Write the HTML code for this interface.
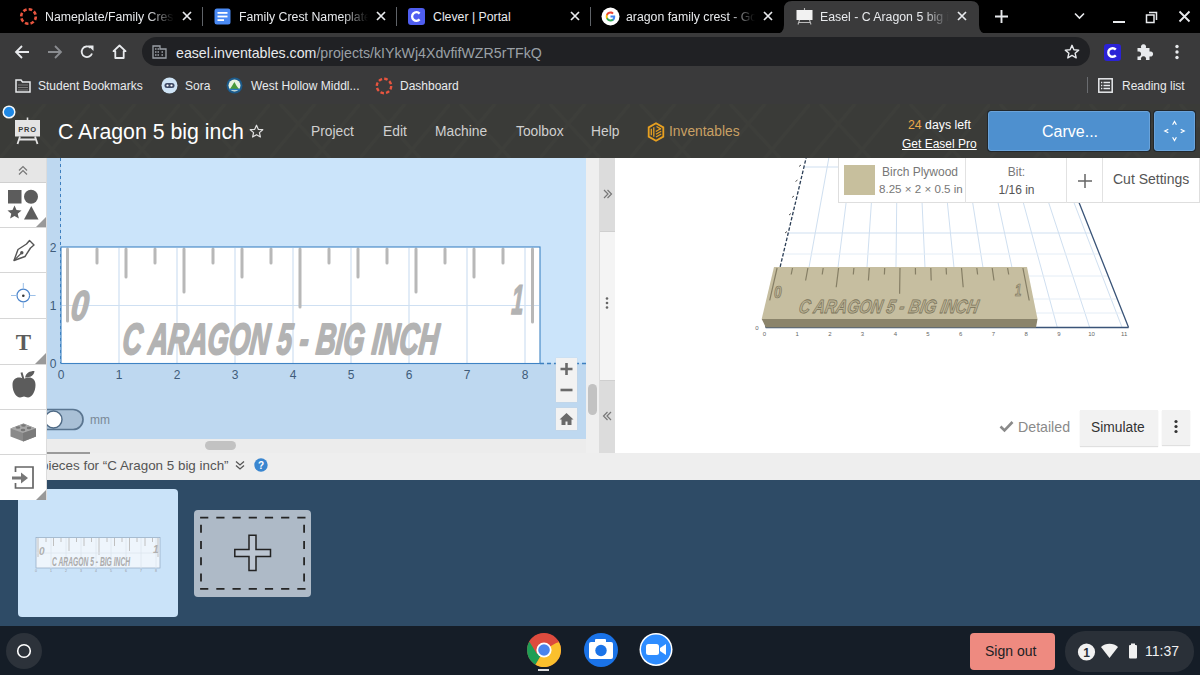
<!DOCTYPE html>
<html><head><meta charset="utf-8">
<style>
*{margin:0;padding:0;box-sizing:border-box}
html,body{width:1200px;height:675px;overflow:hidden;background:#000;font-family:"Liberation Sans",sans-serif;position:relative}
.a{position:absolute}
.t{position:absolute;white-space:nowrap;line-height:1.15}
#tabs{left:0;top:0;width:1200px;height:33px;background:#000}
#addr{left:0;top:33px;width:1200px;height:35px;background:#3a3a3b}
#bm{left:0;top:68px;width:1200px;height:36px;background:#3a3a3b}
#hdr{left:0;top:104px;width:1200px;height:54px;background:#3a3b38}
.tabtxt{color:#e8eaed;font-size:12.3px;top:10px;overflow:hidden}
.fade{-webkit-mask-image:linear-gradient(90deg,#000 80%,transparent 100%)}
.fade2{-webkit-mask-image:linear-gradient(90deg,#000 80%,transparent 100%)}
.bmt{top:12px;font-size:12px;color:#e8eaed}
.mn{top:20px;font-size:13.8px;color:#d0d0d0}
</style></head><body>
<div id="tabs" class="a">
  <!-- tab1 -->
  <svg class="a" style="left:18px;top:6px" width="21" height="21" viewBox="0 0 21 21"><circle cx="10.5" cy="10.5" r="7.3" fill="none" stroke="#e8553f" stroke-width="2.6" stroke-dasharray="3.6 2.13"/></svg>
  <div class="t tabtxt fade" style="left:45px;width:129px">Nameplate/Family Crest</div>
  <svg class="a x" style="left:182px;top:11px" width="10" height="10" viewBox="0 0 10 10"><path d="M1 1L9 9M9 1L1 9" stroke="#e8eaed" stroke-width="1.7"/></svg>
  <div class="a" style="left:202px;top:7px;width:1px;height:19px;background:#5f6368"></div>
  <!-- tab2 -->
  <svg class="a" style="left:214px;top:8px" width="17" height="17" viewBox="0 0 17 17"><rect x="0.5" y="0.5" width="16" height="16" rx="2.5" fill="#4a8af4"/><rect x="3.5" y="4" width="10" height="1.8" fill="#fff"/><rect x="3.5" y="7.6" width="10" height="1.8" fill="#fff"/><rect x="3.5" y="11.2" width="6.5" height="1.8" fill="#fff"/></svg>
  <div class="t tabtxt fade" style="left:239px;width:129px">Family Crest Nameplate</div>
  <svg class="a" style="left:376px;top:11px" width="10" height="10" viewBox="0 0 10 10"><path d="M1 1L9 9M9 1L1 9" stroke="#e8eaed" stroke-width="1.7"/></svg>
  <div class="a" style="left:396px;top:7px;width:1px;height:19px;background:#5f6368"></div>
  <!-- tab3 -->
  <svg class="a" style="left:408px;top:8px" width="17" height="17" viewBox="0 0 17 17"><rect x="0" y="0" width="17" height="17" rx="3" fill="#4f5ef0"/><path d="M11.6 5.6A4.3 4.3 0 1 0 11.6 11.4" fill="none" stroke="#fff" stroke-width="2.3"/></svg>
  <div class="t tabtxt" style="left:433px">Clever | Portal</div>
  <svg class="a" style="left:570px;top:11px" width="10" height="10" viewBox="0 0 10 10"><path d="M1 1L9 9M9 1L1 9" stroke="#e8eaed" stroke-width="1.7"/></svg>
  <div class="a" style="left:590px;top:7px;width:1px;height:19px;background:#5f6368"></div>
  <!-- tab4 -->
  <svg class="a" style="left:601px;top:7px" width="19" height="19" viewBox="0 0 19 19"><circle cx="9.5" cy="9.5" r="9" fill="#fff"/>
    <path d="M14.2 9.7c0-.4 0-.8-.1-1.1H9.5v2h2.6c-.1.7-.5 1.2-1 1.6v1.2h1.6c1-.9 1.5-2.2 1.5-3.7z" fill="#4285f4"/>
    <path d="M9.5 14.4c1.3 0 2.4-.4 3.2-1.2l-1.6-1.2c-.4.3-1 .5-1.6.5-1.3 0-2.3-.8-2.7-2H5.2v1.3c.8 1.6 2.4 2.6 4.3 2.6z" fill="#34a853"/>
    <path d="M6.8 10.6c-.1-.3-.2-.7-.2-1.1s.1-.7.2-1.1V7.1H5.2C4.9 7.8 4.7 8.6 4.7 9.5s.2 1.7.5 2.4l1.6-1.3z" fill="#fbbc05"/>
    <path d="M9.5 6.6c.7 0 1.3.2 1.8.7l1.4-1.4C11.9 5.1 10.8 4.6 9.5 4.6c-1.9 0-3.5 1.1-4.3 2.6l1.6 1.3c.4-1.1 1.4-1.9 2.7-1.9z" fill="#ea4335"/></svg>
  <div class="t tabtxt fade" style="left:626px;width:129px">aragon family crest - Google</div>
  <svg class="a" style="left:763px;top:11px" width="10" height="10" viewBox="0 0 10 10"><path d="M1 1L9 9M9 1L1 9" stroke="#e8eaed" stroke-width="1.7"/></svg>
  <!-- active tab -->
  <svg class="a" style="left:775px;top:0" width="222" height="34" viewBox="0 0 222 34"><path d="M0 34 Q9 34 9 25 L9 9 Q9 1 17 1 L196 1 Q204 1 204 9 L204 25 Q204 34 213 34 Z" fill="#3a3a3b"/></svg>
  <svg class="a" style="left:796px;top:8px" width="17" height="17" viewBox="0 0 17 17"><rect x="0.5" y="2" width="16" height="10" fill="#f1f1f1"/><path d="M3.5 12L2 16.5M13.5 12L15 16.5M8.5 0v2M3 14.5h11" stroke="#bbb" stroke-width="1.1"/></svg>
  <div class="t tabtxt fade2" style="left:820px;width:129px">Easel - C Aragon 5 big inch</div>
  <svg class="a" style="left:957px;top:11px" width="10" height="10" viewBox="0 0 10 10"><path d="M1 1L9 9M9 1L1 9" stroke="#e8eaed" stroke-width="1.7"/></svg>
  <!-- right controls -->
  <svg class="a" style="left:994px;top:9px" width="15" height="15" viewBox="0 0 15 15"><path d="M7.5 1v13M1 7.5h13" stroke="#e8eaed" stroke-width="1.9"/></svg>
  <svg class="a" style="left:1074px;top:12px" width="11" height="8" viewBox="0 0 11 8"><path d="M1 1.5l4.5 4.5 4.5-4.5" fill="none" stroke="#e8eaed" stroke-width="1.6"/></svg>
  <div class="a" style="left:1113px;top:21px;width:12px;height:2px;background:#e8eaed"></div>
  <svg class="a" style="left:1145px;top:11px" width="13" height="13" viewBox="0 0 13 13"><path d="M4 1.5h7.5V9M1.5 4h7.5v7.5H1.5z" fill="none" stroke="#e8eaed" stroke-width="1.5"/></svg>
  <svg class="a" style="left:1178px;top:10px" width="13" height="13" viewBox="0 0 13 13"><path d="M1.5 1.5L11.5 11.5M11.5 1.5L1.5 11.5" stroke="#e8eaed" stroke-width="1.8"/></svg>
</div>
<div id="addr" class="a">
  <svg class="a" style="left:14px;top:11px" width="16" height="16" viewBox="0 0 16 16"><path d="M15 8H2.5M8 2L2 8l6 6" fill="none" stroke="#e8eaed" stroke-width="1.8"/></svg>
  <svg class="a" style="left:47px;top:11px" width="16" height="16" viewBox="0 0 16 16"><path d="M1 8h12.5M8 2l6 6-6 6" fill="none" stroke="#8a8c90" stroke-width="1.8"/></svg>
  <svg class="a" style="left:79px;top:11px" width="16" height="16" viewBox="0 0 16 16"><path d="M13 9.5A5.3 5.3 0 1 1 11.5 3.8" fill="none" stroke="#e8eaed" stroke-width="1.8"/><path d="M9 1.5h5.5V7z" fill="#e8eaed"/></svg>
  <svg class="a" style="left:112px;top:11px" width="15" height="15" viewBox="0 0 15 15"><path d="M7.5 1.5L1.5 7.2h1.8V14h8.4V7.2h1.8z" fill="none" stroke="#e8eaed" stroke-width="1.8" stroke-linejoin="round"/></svg>
  <div class="a" style="left:142px;top:4px;width:948px;height:29px;border-radius:15px;background:#202124"></div>
  <svg class="a" style="left:152px;top:12px" width="15" height="14" viewBox="0 0 15 14"><path d="M1 13V1h7v3h6v9z" fill="none" stroke="#9aa0a6" stroke-width="1.3"/><path d="M3 4h1.5M5.5 4H7M3 7h1.5M5.5 7H7M3 10h1.5M5.5 10H7M9.5 7h1.5M9.5 10h1.5" stroke="#9aa0a6" stroke-width="1.4"/></svg>
  <div class="t" style="left:176px;top:11.5px;font-size:14.2px;color:#e8eaed">easel.inventables.com<span style="color:#9aa0a6">/projects/kIYkWj4XdvfifWZR5rTFkQ</span></div>
  <svg class="a" style="left:1064px;top:11px" width="16" height="16" viewBox="0 0 16 16"><path d="M8 1.3l1.9 4.4 4.8.4-3.6 3.1 1.1 4.7L8 11.4l-4.2 2.5 1.1-4.7L1.3 6.1l4.8-.4z" fill="none" stroke="#e8eaed" stroke-width="1.4" stroke-linejoin="round"/></svg>
  <svg class="a" style="left:1104px;top:11px" width="17" height="17" viewBox="0 0 17 17"><rect x="0" y="0" width="17" height="17" rx="3" fill="#2b22d6"/><path d="M11.8 5.6A4.3 4.3 0 1 0 11.8 11.4" fill="none" stroke="#fff" stroke-width="2.4"/></svg>
  <svg class="a" style="left:1136px;top:9px" width="19" height="19" viewBox="0 0 19 19"><path d="M1.5 6H5.2A2.6 2.6 0 1 1 9.8 6H13.5V9.6A2.6 2.6 0 1 1 13.5 14.4V18H9.8A2.6 2.6 0 1 0 5.2 18H1.5V14.4A2.6 2.6 0 1 0 1.5 9.6z" fill="#e8eaed"/></svg>
  <svg class="a" style="left:1174px;top:11px" width="6" height="16" viewBox="0 0 6 16"><circle cx="3" cy="2.5" r="1.7" fill="#e8eaed"/><circle cx="3" cy="8" r="1.7" fill="#e8eaed"/><circle cx="3" cy="13.5" r="1.7" fill="#e8eaed"/></svg>
</div>
<div id="bm" class="a">
  <svg class="a" style="left:15px;top:11px" width="16" height="14" viewBox="0 0 16 14"><path d="M1 1h5l1.5 2H15v10H1z" fill="none" stroke="#e8eaed" stroke-width="1.5"/><path d="M3.5 6h9M3.5 8.5h9M3.5 11h9" stroke="#bbb" stroke-width="1" stroke-dasharray="1 1"/></svg>
  <div class="t bmt" style="left:38px">Student Bookmarks</div>
  <svg class="a" style="left:161px;top:9px" width="17" height="17" viewBox="0 0 17 17"><circle cx="8.5" cy="8.5" r="8" fill="#cfe4f6"/><rect x="3.5" y="6" width="10" height="5" rx="2.5" fill="#3e4a66"/><circle cx="6.5" cy="8.5" r="1.1" fill="#fff"/><circle cx="10.5" cy="8.5" r="1.1" fill="#fff"/></svg>
  <div class="t bmt" style="left:185px">Sora</div>
  <svg class="a" style="left:226px;top:9px" width="17" height="17" viewBox="0 0 17 17"><circle cx="8.5" cy="8.5" r="8" fill="#1c5a8a"/><circle cx="8.5" cy="8.5" r="6" fill="#e8f2e0"/><path d="M4 12c2-3 3-5 4.5-7 1 2 2 4 4.5 7z" fill="#4a9a3a"/><path d="M3 12.5h11" stroke="#2a7ac0" stroke-width="1.5"/></svg>
  <div class="t bmt" style="left:251px">West Hollow Middl...</div>
  <svg class="a" style="left:375px;top:9px" width="18" height="18" viewBox="0 0 18 18"><circle cx="9" cy="9" r="7.2" fill="none" stroke="#e8553f" stroke-width="2.4" stroke-dasharray="3.55 2.1"/></svg>
  <div class="t bmt" style="left:400px">Dashboard</div>
  <div class="a" style="left:1087px;top:9px;width:1px;height:16px;background:#6a6c70"></div>
  <svg class="a" style="left:1098px;top:10px" width="15" height="15" viewBox="0 0 15 15"><rect x="0.8" y="0.8" width="13.4" height="13.4" fill="none" stroke="#e8eaed" stroke-width="1.5"/><path d="M3 4.5h1.3M3 7.5h1.3M3 10.5h1.3M5.5 4.5h6.5M5.5 7.5h6.5M5.5 10.5h6.5" stroke="#e8eaed" stroke-width="1.4"/></svg>
  <div class="t bmt" style="left:1122px">Reading list</div>
</div>
<div id="hdr" class="a">
  <svg class="a" style="left:0;top:0" width="1200" height="54"><defs><pattern id="tex" width="90" height="54" patternUnits="userSpaceOnUse"><path d="M0 54L45 0M45 54L90 0M10 0L60 54" stroke="#42433f" stroke-width="3" opacity="0.35"/></pattern></defs><rect width="1200" height="54" fill="url(#tex)"/></svg>
  <svg class="a" style="left:1px;top:0" width="16" height="16" viewBox="0 0 16 16"><circle cx="8" cy="8" r="5.8" fill="#1e88e5" stroke="#f4f8fb" stroke-width="1.5"/></svg>
  <svg class="a" style="left:14px;top:13px" width="28" height="28" viewBox="0 0 28 28"><rect x="1" y="3" width="25" height="16.5" fill="#e4e4e4"/><path d="M13.5 0.5v3" stroke="#e4e4e4" stroke-width="1.6"/><path d="M6 19.5L3.5 27M21 19.5L23.5 27M5 22.5h17" stroke="#e4e4e4" stroke-width="1.8"/><text x="13.5" y="15" text-anchor="middle" font-family="Liberation Sans" font-weight="bold" font-size="7.5" fill="#3a3a3a" letter-spacing="0.8">PRO</text></svg>
  <div class="t" style="left:58px;top:16px;font-size:21.3px;color:#fff">C Aragon 5 big inch</div>
  <svg class="a" style="left:249px;top:20px" width="15" height="15" viewBox="0 0 16 16"><path d="M8 1.3l1.9 4.4 4.8.4-3.6 3.1 1.1 4.7L8 11.4l-4.2 2.5 1.1-4.7L1.3 6.1l4.8-.4z" fill="none" stroke="#e0e0e0" stroke-width="1.3" stroke-linejoin="round"/></svg>
  <div class="t mn" style="left:311px">Project</div>
  <div class="t mn" style="left:383px">Edit</div>
  <div class="t mn" style="left:435px">Machine</div>
  <div class="t mn" style="left:516px">Toolbox</div>
  <div class="t mn" style="left:591px">Help</div>
  <svg class="a" style="left:647px;top:18px" width="18" height="20" viewBox="0 0 18 20"><path d="M9 1.3L16.3 5.4v9.2L9 18.7 1.7 14.6V5.4z" fill="none" stroke="#e8a020" stroke-width="1.8"/><path d="M4.3 6.8v6.5M6.8 5.3v9.5M9.5 4.5l4.5 2.6M8.8 9.5l5.2-3M9 12.2l5.2-3M9 15l5.2-3" stroke="#e8a020" stroke-width="1.3"/></svg>
  <div class="t mn" style="left:669px;color:#c9a064">Inventables</div>
  <div class="t" style="left:908px;top:14px;font-size:12.3px;color:#fff;width:62px;text-align:right"><span style="color:#e8a64a">24</span> days left</div>
  <div class="t" style="left:902px;top:33.5px;font-size:12px;color:#fff;text-decoration:underline">Get Easel Pro</div>
  <div class="a" style="left:988px;top:7px;width:162px;height:40px;background:#4e90cf;border-radius:3px;border:1px solid #6aa3da;box-shadow:0 0 0 1px #22282c"></div>
  <div class="t" style="left:1042px;top:19px;font-size:16px;color:#fff">Carve...</div>
  <div class="a" style="left:1154px;top:7px;width:41px;height:40px;background:#5194d2;border-radius:3px;border:1px solid #6aa3da;box-shadow:0 0 0 1px #22282c"></div>
  <svg class="a" style="left:1162px;top:15px" width="25" height="25" viewBox="0 0 25 25"><path d="M10.6 5.8l1.9-3.3 1.9 3.3M10.6 18.2l1.9 3.3 1.9-3.3M6.3 10.3L2.8 12l3.5 1.7M18.7 10.3L22.2 12l-3.5 1.7" fill="none" stroke="#fff" stroke-width="1.2"/></svg>
</div>
<!-- main content backgrounds -->
<div class="a" style="left:0;top:158px;width:1200px;height:295px;background:#fff"></div>
<!-- canvas -->
<div class="a" style="left:46px;top:158px;width:540px;height:281px;background:#bed8f0"></div>
<div class="a" style="left:61px;top:158px;width:525px;height:205px;background:#cbe4fa"></div>
<svg class="a" style="left:46px;top:158px" width="540" height="281" viewBox="46 158 540 281">
  <path d="M60.5 158V363" stroke="#3d7fbf" stroke-width="1" stroke-dasharray="3 3"/>
  <path d="M540 363.5H586" stroke="#3d7fbf" stroke-width="1.3" stroke-dasharray="4 3"/>
  <rect x="61" y="247" width="479" height="116" fill="#fff"/>
  <g stroke="#cfe0f2" stroke-width="1.2">
    <path d="M119 248V363M177 248V363M235 248V363M293 248V363M351 248V363M409 248V363M467 248V363M525 248V363M62 305.5H539"/>
  </g>
  <g stroke="#b8b8b8" stroke-width="3" stroke-linecap="round">
    <path d="M67.5 249V321M97 249V263M126 249V277M155 249V263M184 249V292M213 249V263M242 249V277M271 249V263M300 249V307M329 249V263M358 249V277M387 249V263M416 249V292M445 249V263M474 249V277M503 249V263M532.5 249V322"/>
  </g>
  <rect x="61" y="247" width="479" height="116.5" fill="none" stroke="#3f83c4" stroke-width="1.1"/>
  <text x="0" y="0" font-family="Liberation Sans" font-weight="bold" font-style="italic" font-size="43" fill="#b3b3b3" stroke="#b3b3b3" stroke-width="1.6" transform="translate(70 320) scale(0.72 0.97) skewX(-8)">0</text>
  <text x="0" y="0" font-family="Liberation Sans" font-weight="bold" font-style="italic" font-size="43" fill="#b3b3b3" stroke="#b3b3b3" stroke-width="1.6" transform="translate(511 314) scale(0.5 0.97) skewX(-6)">1</text>
  <text x="0" y="0" font-family="Liberation Sans" font-weight="bold" font-style="italic" font-size="45" fill="#b3b3b3" stroke="#b3b3b3" stroke-width="2" stroke-linejoin="round" transform="translate(121.5 354) scale(0.604 0.97) skewX(-9)">C ARAGON 5 - BIG INCH</text>
  <g font-family="Liberation Sans" font-size="12" fill="#3f5c7a" text-anchor="middle">
    <text x="53" y="251.5">2</text><text x="53" y="309.5">1</text><text x="53" y="367.5">0</text>
    <text x="61" y="379">0</text><text x="119" y="379">1</text><text x="177" y="379">2</text><text x="235" y="379">3</text><text x="293" y="379">4</text><text x="351" y="379">5</text><text x="409" y="379">6</text><text x="467" y="379">7</text><text x="525" y="379">8</text>
  </g>
  <rect x="38" y="409.5" width="45" height="20" rx="10" fill="#a9c0d6" stroke="#5a7590" stroke-width="1.7"/>
  <circle cx="53.5" cy="419.5" r="8.5" fill="#fff" stroke="#4f6a85" stroke-width="1.4"/>
  <text x="90" y="423.5" font-family="Liberation Sans" font-size="12" fill="#7a8896">mm</text>
</svg>
<!-- zoom controls -->
<div class="a" style="left:556px;top:358px;width:21px;height:44px;background:#f2f2f2;box-shadow:0 0 1px #ccc"></div>
<svg class="a" style="left:556px;top:358px" width="21" height="44" viewBox="0 0 21 44"><path d="M10.5 5v12M4.5 11h12" stroke="#6a6a6a" stroke-width="2.6"/><path d="M4.5 32h12" stroke="#6a6a6a" stroke-width="2.6"/></svg>
<div class="a" style="left:556px;top:408px;width:21px;height:22px;background:#f2f2f2;box-shadow:0 0 1px #ccc"></div>
<svg class="a" style="left:556px;top:408px" width="21" height="22" viewBox="0 0 21 22"><path d="M10.5 5L3.5 11.5h2V17h4v-3.5h2V17h4v-5.5h2z" fill="#6a6a6a"/></svg>
<!-- scroll strips -->
<div class="a" style="left:46px;top:439px;width:540px;height:14px;background:#ececec"></div>
<div class="a" style="left:205px;top:441px;width:31px;height:9px;background:#c2c2c2;border-radius:5px"></div>
<div class="a" style="left:586px;top:158px;width:14px;height:295px;background:#efefef;border-right:1px solid #dcdcdc"></div>
<div class="a" style="left:588px;top:384px;width:9px;height:31px;background:#c2c2c2;border-radius:5px"></div>
<!-- divider -->
<div class="a" style="left:600px;top:158px;width:15px;height:295px;background:#f4f4f4"></div>
<div class="a" style="left:600px;top:158px;width:15px;height:74px;background:#dcdcdc;border-bottom:1px solid #cfcfcf"></div>
<div class="a" style="left:600px;top:380px;width:15px;height:73px;background:#dcdcdc;border-top:1px solid #cfcfcf"></div>
<svg class="a" style="left:600px;top:186px" width="15" height="16" viewBox="0 0 15 16"><path d="M4 4l4 4-4 4M7.5 4l4 4-4 4" fill="none" stroke="#777" stroke-width="1.2"/></svg>
<svg class="a" style="left:600px;top:408px" width="15" height="16" viewBox="0 0 15 16"><path d="M11 4L7 8l4 4M7.5 4l-4 4 4 4" fill="none" stroke="#777" stroke-width="1.2"/></svg>
<svg class="a" style="left:604px;top:296px" width="6" height="15" viewBox="0 0 6 15"><circle cx="3" cy="2.5" r="1.3" fill="#666"/><circle cx="3" cy="7" r="1.3" fill="#666"/><circle cx="3" cy="11.5" r="1.3" fill="#666"/></svg>
<svg class="a" style="left:615px;top:158px" width="585" height="295" viewBox="615 158 585 295">
  <g stroke="#cfdff0" stroke-width="1"><path d="M830.3 150L798.1 327.5 M852.7 150L830.5 327.5 M875.0 150L862.9 327.5 M897.3 150L895.3 327.5 M919.7 150L927.7 327.5 M942.0 150L960.1 327.5 M964.3 150L992.5 327.5 M986.7 150L1024.9 327.5 M1009.0 150L1057.3 327.5 M1031.4 150L1089.7 327.5 M1053.7 150L1122.1 327.5"/><path d="M803.9 167H1064.9 M788.2 233H1091.1"/></g>
  <g stroke="#e4edf6" stroke-width="1"><path d="M783.2 254H1099.4 M778.0 276H1108.2 M772.5 299H1117.3 M769.2 313H1122.8"/></g>
  <path d="M808.0 150L765.7 327.5" stroke="#2a3d55" stroke-width="1.3" stroke-dasharray="3.5 1.8"/>
  <path d="M1058.2 150L1128.6 327.5 M765.7 327.5H1128.6" stroke="#3a5478" stroke-width="1.3"/>
  <path d="M774 267H1027L1037.5 319H761.7z" fill="#c6bea0"/>
  <path d="M761.7 319H1037.5L1036 327.5H765.8z" fill="#8b846b"/>
  <g stroke="#857e65" stroke-width="1.2"><path d="M777.1 268.0L769.7 300.3 M792.5 268.0L791.2 274.5 M807.9 268.0L805.6 280.5 M823.2 268.0L822.2 274.5 M838.6 268.0L836.2 287.3 M853.9 268.0L853.3 274.5 M869.3 268.0L868.4 280.5 M884.7 268.0L884.4 274.5 M900.0 268.0L899.6 293.8 M915.4 268.0L915.5 274.5 M930.8 268.0L931.2 280.5 M946.1 268.0L946.5 274.5 M961.5 268.0L963.2 287.3 M976.8 268.0L977.6 274.5 M992.2 268.0L994.0 280.5 M1007.6 268.0L1008.7 274.5 M1022.9 268.0L1029.2 300.5"/></g>
  <text x="0" y="0" font-family="Liberation Sans" font-weight="bold" font-style="italic" font-size="20" fill="#b8b092" stroke="#7a735a" stroke-width="0.8" transform="translate(798 313) scale(0.77 0.95) skewX(-14)">C ARAGON 5 - BIG INCH</text>
  <text x="0" y="0" font-family="Liberation Sans" font-weight="bold" font-style="italic" font-size="19" fill="#b8b092" stroke="#7a735a" stroke-width="0.8" transform="translate(774 297.5) scale(0.72 0.85)">0</text>
  <text x="0" y="0" font-family="Liberation Sans" font-weight="bold" font-style="italic" font-size="19" fill="#b8b092" stroke="#7a735a" stroke-width="0.8" transform="translate(1015 295.5) scale(0.6 0.85)">1</text>
  <g font-family="Liberation Sans" font-size="6" fill="#666" text-anchor="middle">
    <text x="764.4" y="336">0</text><text x="797.1" y="336">1</text><text x="829.8" y="336">2</text><text x="862.5" y="336">3</text><text x="895.3" y="336">4</text><text x="928.0" y="336">5</text><text x="960.7" y="336">6</text><text x="993.4" y="336">7</text><text x="1026.1" y="336">8</text><text x="1058.8" y="336">9</text><text x="1091.5" y="336">10</text><text x="1124.2" y="336">11</text>
    <text x="757" y="330">0</text></g><g stroke="#555" stroke-width="1"><path d="M799 166.5l2-1.5M795.5 181.5l2-1.5M792 197.5l2-1.5M789 215l2-1.5M785 233l2-1.5"/>
  </g>
</svg>
<!-- info panel -->
<div class="a" style="left:838px;top:158px;width:362px;height:45px;background:#fff;border:1px solid #dedede;border-top:none"></div>
<div class="a" style="left:844px;top:165px;width:31px;height:30px;background:#c7bf9d"></div>
<div class="t" style="left:882px;top:165.5px;font-size:12px;color:#777">Birch Plywood</div>
<div class="t" style="left:879px;top:182px;font-size:11.6px;color:#777">8.25 × 2 × 0.5 in</div>
<div class="a" style="left:965px;top:158px;width:1px;height:45px;background:#e2e2e2"></div>
<div class="t" style="left:966px;top:165.5px;width:101px;text-align:center;font-size:12px;color:#777">Bit:</div>
<div class="t" style="left:966px;top:184px;width:101px;text-align:center;font-size:12px;color:#555">1/16 in</div>
<div class="a" style="left:1066px;top:158px;width:1px;height:45px;background:#e2e2e2"></div>
<svg class="a" style="left:1077px;top:173px" width="16" height="16" viewBox="0 0 16 16"><path d="M8 1v14M1 8h14" stroke="#666" stroke-width="1.5"/></svg>
<div class="a" style="left:1102px;top:158px;width:1px;height:45px;background:#e2e2e2"></div>
<div class="t" style="left:1113px;top:171px;font-size:14px;color:#555">Cut Settings</div>
<!-- bottom controls -->
<svg class="a" style="left:999px;top:420px" width="15" height="13" viewBox="0 0 15 13"><path d="M1.5 6.5l4 4 8-8.5" fill="none" stroke="#8a8a8a" stroke-width="2.6"/></svg>
<div class="t" style="left:1018px;top:419px;font-size:14.2px;color:#8a8a8a">Detailed</div>
<div class="a" style="left:1080px;top:410px;width:78px;height:36px;background:#f2f2f2;box-shadow:0 1px 1px #e0e0e0"></div>
<div class="t" style="left:1091px;top:420px;font-size:13.8px;color:#333">Simulate</div>
<div class="a" style="left:1162px;top:410px;width:28px;height:35px;background:#f2f2f2;box-shadow:0 1px 1px #e0e0e0"></div>
<svg class="a" style="left:1173px;top:418px" width="6" height="17" viewBox="0 0 6 17"><circle cx="3" cy="3.5" r="1.6" fill="#333"/><circle cx="3" cy="8.5" r="1.6" fill="#333"/><circle cx="3" cy="13.5" r="1.6" fill="#333"/></svg>
<!-- pieces bar -->
<div class="a" style="left:0;top:453px;width:1200px;height:27px;background:#eeeeee"></div>
<div class="t" style="left:41px;top:457.5px;font-size:13.4px;color:#555">pieces for “C Aragon 5 big inch”</div>
<svg class="a" style="left:234px;top:459px" width="12" height="12" viewBox="0 0 12 12"><path d="M2 2.5l4 3.5 4-3.5M2 6.5l4 3.5 4-3.5" fill="none" stroke="#555" stroke-width="1.3"/></svg>
<svg class="a" style="left:254px;top:458px" width="14" height="14" viewBox="0 0 14 14"><circle cx="7" cy="7" r="6.7" fill="#3a86d0"/><text x="7" y="11" text-anchor="middle" font-family="Liberation Sans" font-weight="bold" font-size="10" fill="#fff">?</text></svg>
<div class="a" style="left:46px;top:452px;width:44px;height:1.5px;background:#9a9a9a"></div>
<!-- projects -->
<div class="a" style="left:0;top:480px;width:1200px;height:146px;background:#2e4b66"></div>
<div class="a" style="left:18px;top:489px;width:160px;height:128px;background:#cae3f9;border-radius:4px"></div>
<svg class="a" style="left:30px;top:530px" width="136" height="46" viewBox="30 530 136 46">
  <rect x="36" y="537.5" width="124" height="30.5" fill="#eef5fc" stroke="#9ab0c8" stroke-width="0.8"/>
  <g stroke="#c0c0c0" stroke-width="1"><path d="M38 538V557M46 538V542M53.5 538V546M61 538V542M69 538V551M76.5 538V542M84 538V546M91.5 538V542M99 538V555M107 538V542M114.5 538V546M122 538V542M129.5 538V551M137 538V542M145 538V546M152.5 538V542M158 538V557"/></g>
  <g stroke="#dde6ef" stroke-width="0.8"><path d="M51 538V568M66 538V568M81 538V568M96 538V568M111 538V568M126 538V568M141 538V568M156 538V568M36.5 553H159.5"/></g><text x="0" y="0" font-family="Liberation Sans" font-weight="bold" font-style="italic" font-size="12" fill="#ababab" transform="translate(52 566) scale(0.56 1)">C ARAGON 5 - BIG INCH</text><g fill="#999" font-family="Liberation Sans" font-size="3.5" text-anchor="middle"><text x="36" y="572">0</text><text x="51" y="572">1</text><text x="66" y="572">2</text><text x="81" y="572">3</text><text x="96" y="572">4</text><text x="111" y="572">5</text><text x="126" y="572">6</text><text x="141" y="572">7</text><text x="156" y="572">8</text></g>
  <text x="39" y="555" font-family="Liberation Sans" font-weight="bold" font-style="italic" font-size="10" fill="#b0b0b0">0</text>
  <text x="153" y="553" font-family="Liberation Sans" font-weight="bold" font-style="italic" font-size="10" fill="#b0b0b0">1</text>
</svg>
<div class="a" style="left:194px;top:510px;width:117px;height:87px;background:#aebac7;border-radius:4px"></div>
<svg class="a" style="left:194px;top:510px" width="117" height="87" viewBox="0 0 117 87">
  <g stroke="#252525" stroke-width="1.8" fill="none"><path d="M6.1 7.7H111.5M6.1 78.8H111.5" stroke-dasharray="8.2 8"/><path d="M7 14.7V71.8M110.1 14.7V71.8" stroke-dasharray="8 8.3"/></g>
  <path d="M55 25.3h7v14.2h14.5v7H62V60.5h-7V46.5H40.8v-7H55z" fill="#bcc6d2" stroke="#222" stroke-width="1.5"/>
</svg>
<!-- shelf -->
<div class="a" style="left:0;top:626px;width:1200px;height:49px;background:#151d27"></div>
<svg class="a" style="left:0;top:626px" width="1200" height="49" viewBox="0 626 1200 49">
  <circle cx="24" cy="651" r="18" fill="#2c323a"/>
  <circle cx="24" cy="651" r="6.3" fill="none" stroke="#fff" stroke-width="1.6"/>
  <!-- chrome -->
  <g transform="translate(544 650)">
    <circle r="17" fill="#dd4b3e"/>
    <path d="M0 0L-14.7 -8.5A17 17 0 0 0 -8.5 14.7z" fill="#1e9e55"/>
    <path d="M0 0L-8.5 14.7A17 17 0 0 0 17 0A17 17 0 0 0 14.7 -8.5z" fill="#fbc02d"/>
    <path d="M0 -7.5H14.7A17 17 0 0 0 -14.7 -8.5L-7 4z" fill="#dd4b3e"/>
    <circle r="7.6" fill="#fff"/><circle r="5.8" fill="#4a84ec"/>
  </g>
  <rect x="538" y="669" width="11" height="2" fill="#ddd"/>
  <!-- camera -->
  <circle cx="601" cy="650" r="17" fill="#1a73e8"/>
  <rect x="589" y="642" width="24" height="17" rx="2" fill="#fff"/>
  <rect x="595" y="639" width="11" height="4" rx="1" fill="#fff"/>
  <circle cx="601" cy="650.5" r="5.7" fill="#1a73e8"/>
  <!-- zoom -->
  <circle cx="656" cy="649.5" r="16.5" fill="#fff"/>
  <circle cx="656" cy="649.5" r="15" fill="#2d8cff"/>
  <rect x="646" y="644" width="13" height="11" rx="2.5" fill="#fff"/>
  <path d="M660 648l6-4v11l-6-4z" fill="#fff"/>
</svg>
<div class="a" style="left:970px;top:633px;width:85px;height:37px;background:#ee8a80;border-radius:4px"></div>
<div class="t" style="left:985px;top:643px;font-size:14px;color:#202124">Sign out</div>
<div class="a" style="left:1065px;top:631px;width:129px;height:41px;background:#2a3038;border-radius:20px"></div>
<svg class="a" style="left:1065px;top:631px" width="129" height="41" viewBox="1065 631 129 41">
  <circle cx="1086.5" cy="652" r="8.6" fill="#f1f1f1"/>
  <text x="1086.5" y="656.5" text-anchor="middle" font-family="Liberation Sans" font-weight="bold" font-size="12" fill="#2a3038">1</text>
  <path d="M1101 647A13 13 0 0 1 1118 647L1109.5 658z" fill="#f1f1f1"/>
  <rect x="1129" y="645" width="8" height="13.5" rx="1" fill="#f1f1f1"/>
  <rect x="1131" y="643.5" width="4" height="2" fill="#f1f1f1"/>
</svg>
<div class="t" style="left:1145px;top:643px;font-size:14px;color:#f1f1f1">11:37</div>
<!-- left toolbar -->
<div class="a" style="left:0;top:158px;width:47px;height:342px;background:#fff;border-right:1px solid #dcdcdc"></div>
<div class="a" style="left:0;top:158px;width:46px;height:25px;background:#e6e6e6;border-bottom:1px solid #d0d0d0"></div>
<svg class="a" style="left:16px;top:164px" width="14" height="13" viewBox="0 0 14 13"><path d="M3 6.5l4-4 4 4M3 10.5l4-4 4 4" fill="none" stroke="#777" stroke-width="1.2"/></svg>
<div class="a" style="left:0;top:227px;width:46px;height:1px;background:#d6d6d6"></div>
<div class="a" style="left:0;top:272px;width:46px;height:1px;background:#d6d6d6"></div>
<div class="a" style="left:0;top:318px;width:46px;height:1px;background:#d6d6d6"></div>
<div class="a" style="left:0;top:364px;width:46px;height:1px;background:#d6d6d6"></div>
<div class="a" style="left:0;top:409px;width:46px;height:1px;background:#d6d6d6"></div>
<div class="a" style="left:0;top:454px;width:46px;height:1px;background:#d6d6d6"></div>
<svg class="a" style="left:0;top:158px" width="47" height="342" viewBox="0 158 47 342">
  <rect x="8" y="190" width="13.5" height="13.5" fill="#5c5c5c"/>
  <circle cx="31" cy="196.7" r="7" fill="#5c5c5c"/>
  <path d="M14.5 205.5l2 4.6 5 .4-3.8 3.2 1.2 4.9-4.4-2.7-4.4 2.7 1.2-4.9-3.8-3.2 5-.4z" fill="#5c5c5c"/>
  <path d="M31.3 206L38.5 219.5H24z" fill="#5c5c5c"/>
  <path d="M46 217v10H36z" fill="#999"/>
  <path d="M14 260.5l4-11 8.5-5.5 3-3.5 4.5 4.5-3.5 3-5.5 8.5z" fill="none" stroke="#555" stroke-width="1.4" stroke-linejoin="round"/>
  <path d="M14 260.5l7-7" stroke="#555" stroke-width="1.2"/><circle cx="21.8" cy="252.7" r="1.7" fill="#555"/>
  <circle cx="23.3" cy="295.5" r="6.3" fill="none" stroke="#4d86cc" stroke-width="1.2"/>
  <path d="M23.3 283v6M23.3 302v6M11 295.5h6M29.6 295.5h6" stroke="#9cc0e8" stroke-width="1"/>
  <circle cx="23.3" cy="295.8" r="1.3" fill="#333"/>
  <text x="23.5" y="350" text-anchor="middle" font-family="Liberation Serif" font-weight="bold" font-size="23" fill="#5c5c5c">T</text>
  <path d="M46 353v11H35z" fill="#999"/>
  <path d="M23.5 379.5L21.5 372.5" stroke="#5c5c5c" stroke-width="2"/><path d="M25 377.5C26 373 29.5 371 34.5 371C34 375.5 30.5 377.5 25 377.5z" fill="#5c5c5c"/>
  <path d="M24 379C20 376.5 12.5 376.5 12.5 385C12.5 392 16.5 397.5 20 397.5C22 397.5 22.5 396.5 24 396.5C25.5 396.5 26 397.5 28 397.5C31.5 397.5 35.5 392 35.5 385C35.5 376.5 28 376.5 24 379z" fill="#5c5c5c"/>
  <path d="M10.5 428.5l13-5 12.5 5v8l-12.5 5-13-5z" fill="#8a8a8a"/>
  <path d="M10.5 428.5l12.5 4.5 13-4.5-12.5-5z" fill="#a8a8a8"/>
  <path d="M23 433v8.5l13-5v-8z" fill="#7a7a7a"/>
  <g fill="#777"><ellipse cx="18" cy="427.5" rx="2.3" ry="1.3"/><ellipse cx="23.5" cy="425.5" rx="2.3" ry="1.3"/><ellipse cx="23" cy="430" rx="2.3" ry="1.3"/><ellipse cx="29" cy="428" rx="2.3" ry="1.3"/></g>
  <path d="M15.5 472v-5h17.5v21H15.5v-5" fill="none" stroke="#666" stroke-width="1.7"/>
  <path d="M12 476.5h9v-4l7 5.5-7 5.5v-4h-9z" fill="#777"/>
  <path d="M46 490v10H36z" fill="#999"/>
</svg>
</body></html>
